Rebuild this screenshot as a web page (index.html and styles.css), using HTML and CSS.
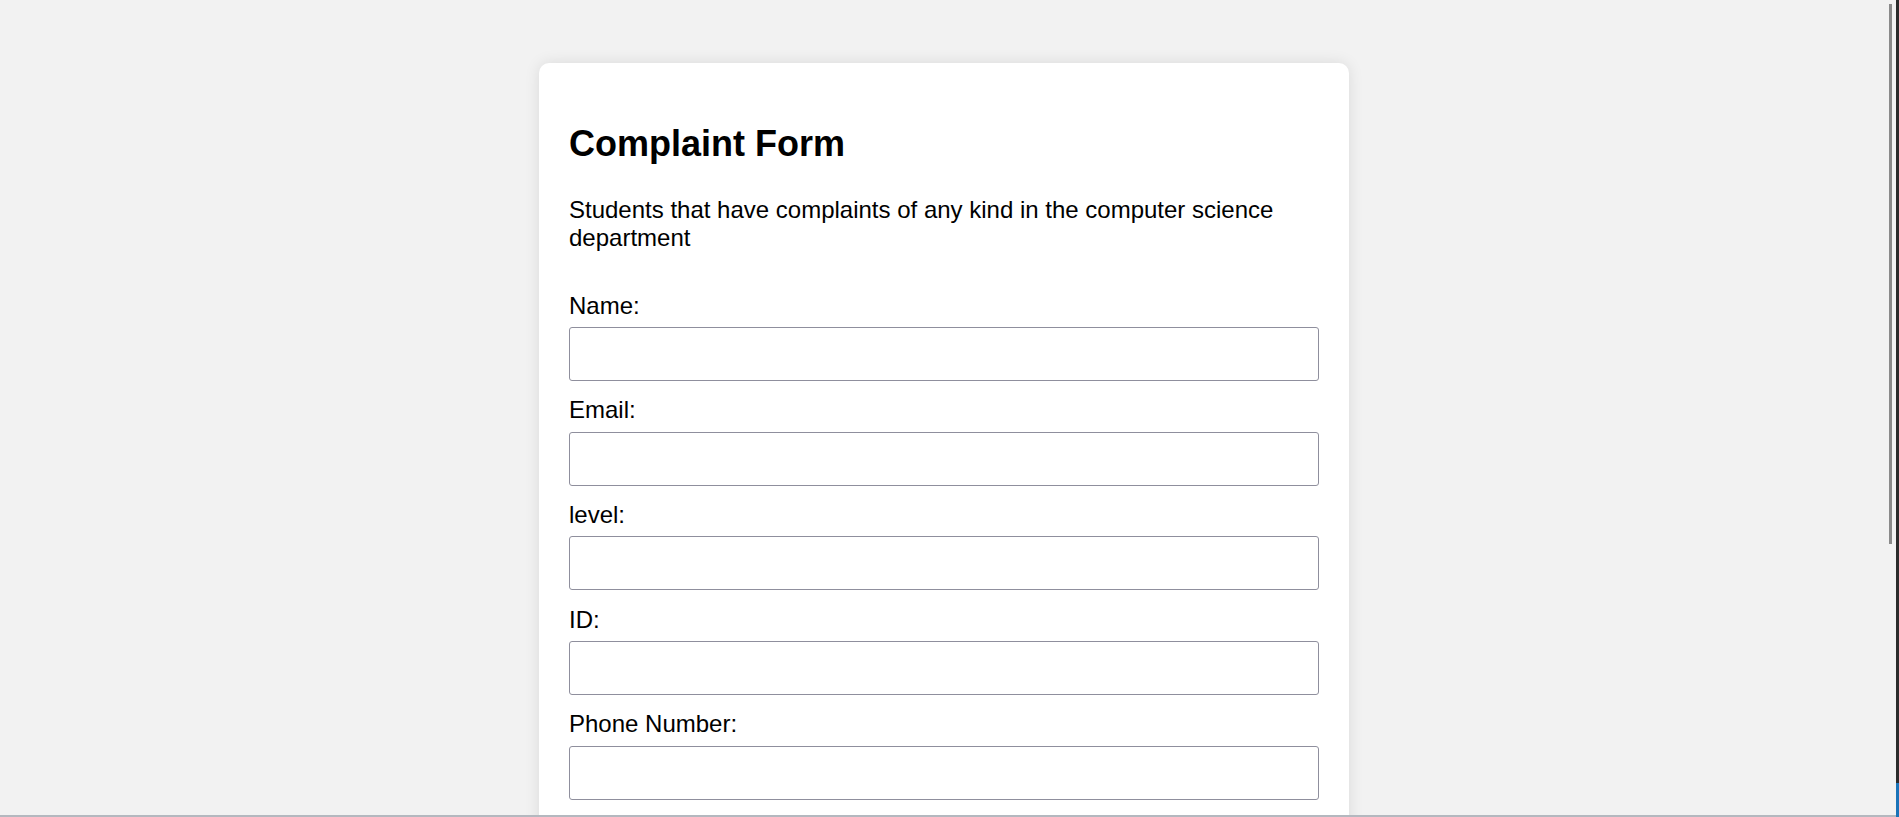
FILE: index.html
```html
<!DOCTYPE html>
<html lang="en">
<head>
<meta charset="utf-8">
<title>Complaint Form</title>
<link rel="stylesheet" href="styles.css">
</head>
<body>
  <main class="page">
    <section class="card">
      <h2 class="title">Complaint Form</h2>
      <p class="intro">Students that have complaints of any kind in the computer science department</p>
      <form class="form">
        <div class="field">
          <label class="label" for="name">Name:</label>
          <input class="input" type="text" id="name">
        </div>
        <div class="field">
          <label class="label" for="email">Email:</label>
          <input class="input" type="email" id="email">
        </div>
        <div class="field">
          <label class="label" for="level">level:</label>
          <input class="input" type="text" id="level">
        </div>
        <div class="field">
          <label class="label" for="sid">ID:</label>
          <input class="input" type="text" id="sid">
        </div>
        <div class="field">
          <label class="label" for="phone">Phone Number:</label>
          <input class="input" type="tel" id="phone">
        </div>
      </form>
    </section>
  </main>
  <div class="scroll-thumb"></div>
  <div class="window-right"><span class="window-accent"></span></div>
  <div class="window-edge"></div>
</body>
</html>
```

FILE: styles.css
```css
html {
  background: #f2f2f2;
}

body {
  margin: 0;
  padding-right: 11px;
  font-family: "Liberation Sans", Arial, sans-serif;
  color: #000;
}

.page {
  padding-top: 63px;
}

.card {
  width: 810px;
  box-sizing: border-box;
  margin: 0 auto;
  padding: 30px 30px 420px;
  background: #fff;
  border-radius: 10px;
  box-shadow: 0 0 15px rgba(0, 0, 0, 0.1);
}

.title {
  font-size: 36px;
  font-weight: 700;
  line-height: normal;
  margin: 30px 0 31px;
}

.intro {
  font-size: 24px;
  line-height: normal;
  margin: 0 0 39.6px;
}

.form {
  display: flex;
  flex-direction: column;
}

.field {
  display: flex;
  flex-direction: column;
}

.label {
  font-size: 24px;
  line-height: normal;
}

.input {
  display: block;
  width: 100%;
  height: 54px;
  box-sizing: border-box;
  margin: 7.5px 0 15.2px;
  border: 1px solid #8f8f9d;
  border-radius: 3px;
  background: #fff;
  font-size: 24px;
  font-family: inherit;
}

.scroll-thumb {
  position: fixed;
  top: 4px;
  right: 7px;
  width: 3px;
  height: 540px;
  background: #8a8a8a;
}

.window-right {
  position: fixed;
  top: 0;
  right: 0;
  bottom: 0;
  width: 3px;
  background: #2b2b2b;
  display: flex;
  flex-direction: column;
  justify-content: flex-end;
}

.window-accent {
  height: 34px;
  background: #1a73b8;
}

.window-edge {
  position: fixed;
  left: 0;
  right: 3px;
  bottom: 0;
  height: 2px;
  background: #b4b8bf;
}
```
